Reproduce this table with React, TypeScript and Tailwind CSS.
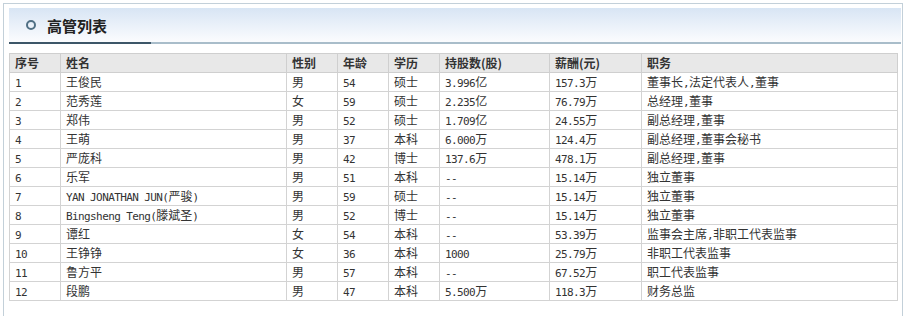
import React from "react";

// Executive list table ("高管列表") inside a light framed panel

const headers = ["序号", "姓名", "性别", "年龄", "学历", "持股数(股)", "薪酬(元)", "职务"];

// column widths in px, matching the grid lines of the reference
const widths = ["w-[51px]", "w-[226px]", "w-[51px]", "w-[51px]", "w-[51px]", "w-[110px]", "w-[92px]", "w-[256px]"];

const rows = [
  ["1", "王俊民", "男", "54", "硕士", "3.996亿", "157.3万", "董事长,法定代表人,董事"],
  ["2", "范秀莲", "女", "59", "硕士", "2.235亿", "76.79万", "总经理,董事"],
  ["3", "郑伟", "男", "52", "硕士", "1.709亿", "24.55万", "副总经理,董事"],
  ["4", "王萌", "男", "37", "本科", "6.000万", "124.4万", "副总经理,董事会秘书"],
  ["5", "严庞科", "男", "42", "博士", "137.6万", "478.1万", "副总经理,董事"],
  ["6", "乐军", "男", "51", "本科", "--", "15.14万", "独立董事"],
  ["7", "YAN JONATHAN JUN(严骏)", "男", "59", "硕士", "--", "15.14万", "独立董事"],
  ["8", "Bingsheng Teng(滕斌圣)", "男", "52", "博士", "--", "15.14万", "独立董事"],
  ["9", "谭红", "女", "54", "本科", "--", "53.39万", "监事会主席,非职工代表监事"],
  ["10", "王铮铮", "女", "36", "本科", "1000", "25.79万", "非职工代表监事"],
  ["11", "鲁方平", "男", "57", "本科", "--", "67.52万", "职工代表监事"],
  ["12", "段鹏", "男", "47", "本科", "5.500万", "118.3万", "财务总监"],
];

// Latin runs get a narrow monospace (6px advance), CJK keeps full width
const Txt = ({ text }: { text: string }) => (
  <>
    {text.split(/([\x00-\x7f]+)/).filter(Boolean).map((part, i) =>
      /^[\x00-\x7f]+$/.test(part) ? (
        <span key={i} className="font-['DejaVu_Sans_Mono',monospace] text-[11px] tracking-[-0.6px]">
          {part}
        </span>
      ) : (
        <span key={i}>{part}</span>
      )
    )}
  </>
);

export default function App() {
  return (
    <div className="w-[904px] h-[316px] overflow-hidden bg-white pt-[3px] pl-[3px] pr-[1px] font-['Noto_Sans_CJK_SC',sans-serif] text-[#333]">
      <div className="h-full border border-b-0 border-[#c3d0d9] pl-[5px] pt-[4px] pr-[1px]">
        {/* Panel title bar */}
        <div className="h-[34px] bg-gradient-to-b from-[#d8e5f4] to-[#fbfcfe] flex items-center">
          <span className="ml-[17px] w-[10px] h-[10px] rounded-full border-2 border-[#4f6f84]" />
          <span className="ml-[11px] text-[15px] font-bold text-[#222] leading-none">高管列表</span>
        </div>
        <div className="flex h-[2px]">
          <div className="w-[142px] bg-[#3d5668]" />
          <div className="flex-1 bg-[#a9bdca]" />
        </div>

        {/* Executive table */}
        <table className="mt-[9px] w-[888px] border-collapse table-fixed text-[12px] leading-none">
          <thead>
            <tr className="bg-[#e8e8e8]">
              {headers.map((h, i) => (
                <th
                  key={h}
                  className={`${widths[i]} h-[19px] border border-[#cfcfcf] pl-[5px] text-left font-bold text-[#333]`}
                >
                  {h}
                </th>
              ))}
            </tr>
          </thead>
          <tbody>
            {rows.map((row) => (
              <tr key={row[0]}>
                {row.map((cell, i) => (
                  <td key={i} className="h-[19px] border border-[#d3d3d3] pl-[5px] whitespace-nowrap">
                    <Txt text={cell} />
                  </td>
                ))}
              </tr>
            ))}
          </tbody>
        </table>
      </div>
    </div>
  );
}
